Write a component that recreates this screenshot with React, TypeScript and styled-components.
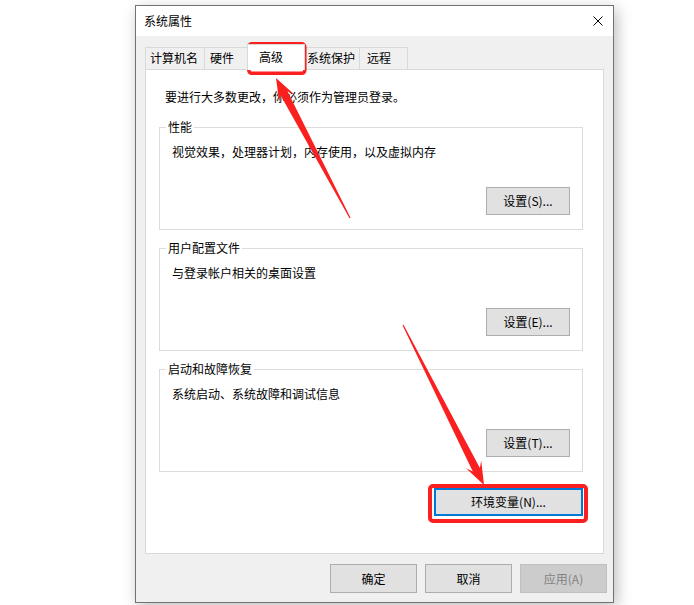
import React from "react";
import styled, { createGlobalStyle } from "styled-components";

const GlobalStyle = createGlobalStyle`
  html, body { margin: 0; padding: 0; background: #fff; }
  body {
    font-family: "Noto Sans CJK SC", "Noto Sans", sans-serif;
    font-size: 12px;
    color: #000;
  }
`;

const Page = styled.div`
  position: relative;
  width: 694px;
  height: 605px;
  overflow: hidden;
  box-sizing: border-box;
  padding: 5px 0 0 135px;
`;

const Window = styled.div`
  width: 479px;
  box-sizing: border-box;
  border: 1px solid #727272;
  box-shadow: 3px 4px 14px rgba(0, 0, 0, 0.26);
  display: flex;
  flex-direction: column;
  background: #f0f0f0;
`;

const TitleBar = styled.div`
  height: 30px;
  background: #fff;
  display: flex;
  align-items: center;
  justify-content: space-between;
  padding: 0 10px 0 8px;
`;

const Title = styled.span`
  line-height: 16px;
`;

const Body = styled.div`
  display: flex;
  flex-direction: column;
  padding: 7px 5px 9px 9px;
`;

const TabRow = styled.div`
  display: flex;
  align-items: flex-end;
  height: 26px;
`;

const Tab = styled.div<{ $w: number; $pad: number; $active?: boolean }>`
  box-sizing: border-box;
  width: ${(p) => p.$w}px;
  height: ${(p) => (p.$active ? 26 : 22)}px;
  margin-bottom: ${(p) => (p.$active ? -1 : 0)}px;
  padding-left: ${(p) => p.$pad}px;
  border: 1px solid #d9d9d9;
  border-bottom: none;
  background: ${(p) => (p.$active ? "#fff" : "#f0f0f0")};
  line-height: ${(p) => (p.$active ? 24 : 20)}px;
  white-space: nowrap;
  position: relative;
  z-index: ${(p) => (p.$active ? 1 : 0)};
  & + & { margin-left: -1px; }
`;

const Panel = styled.div`
  box-sizing: border-box;
  height: 485px;
  margin-right: 4px;
  background: #fff;
  border: 1px solid #d9d9d9;
  padding: 19px 20px 0 13px;
  display: flex;
  flex-direction: column;
`;

const Intro = styled.div`
  line-height: 16px;
  padding-left: 6px;
`;

const Group = styled.div<{ $mt: number }>`
  box-sizing: border-box;
  height: 103px;
  margin-top: ${(p) => p.$mt}px;
  border: 1px solid #dcdcdc;
  padding: 0 12px 14px 12px;
  display: flex;
  flex-direction: column;
`;

const Legend = styled.span`
  align-self: flex-start;
  margin: -9px 0 0 -6px;
  padding: 0 2px;
  background: #fff;
  line-height: 16px;
`;

const Desc = styled.div`
  margin-top: 9px;
  line-height: 16px;
`;

const Button = styled.div<{ $w?: number; $h?: number; $disabled?: boolean; $focus?: boolean }>`
  box-sizing: border-box;
  width: ${(p) => p.$w ?? 84}px;
  height: ${(p) => p.$h ?? 28}px;
  border: ${(p) =>
    p.$focus ? "2px solid #0078d7" : p.$disabled ? "1px solid #bfbfbf" : "1px solid #adadad"};
  background: ${(p) => (p.$disabled ? "#cccccc" : "#e1e1e1")};
  color: ${(p) => (p.$disabled ? "#838383" : "#000")};
  display: flex;
  align-items: center;
  justify-content: center;
  line-height: 16px;
  white-space: nowrap;
`;

const GroupButton = styled(Button)`
  margin-top: auto;
  align-self: flex-end;
`;

const EnvButton = styled(Button)`
  margin-top: 16px;
  align-self: flex-end;
`;

const ButtonRow = styled.div`
  display: flex;
  justify-content: flex-end;
  gap: 8px;
  margin-top: 10px;
  padding-right: 1px;
`;

const Overlay = styled.svg`
  position: absolute;
  left: 0;
  top: 0;
  width: 694px;
  height: 605px;
  pointer-events: none;
`;

function arrowPoints(tx: number, ty: number, px: number, py: number): string {
  const dx = px - tx;
  const dy = py - ty;
  const len = Math.hypot(dx, dy);
  const ux = dx / len;
  const uy = dy / len;
  const nx = -uy;
  const ny = ux;
  const L = 23;
  const W = 8.5;
  const S = 17;
  const w1 = 4;
  const w0 = 0.6;
  const bx = px - L * ux;
  const by = py - L * uy;
  const sx = px - S * ux;
  const sy = py - S * uy;
  const pts: [number, number][] = [
    [px, py],
    [bx + W * nx, by + W * ny],
    [sx + w1 * nx, sy + w1 * ny],
    [tx + w0 * nx, ty + w0 * ny],
    [tx - w0 * nx, ty - w0 * ny],
    [sx - w1 * nx, sy - w1 * ny],
    [bx - W * nx, by - W * ny],
  ];
  return pts.map(([x, y]) => `${x.toFixed(1)},${y.toFixed(1)}`).join(" ");
}

const tabs = [
  { label: "计算机名", w: 60, pad: 4 },
  { label: "硬件", w: 44, pad: 5 },
  { label: "高级", w: 58, pad: 11, active: true },
  { label: "系统保护", w: 56, pad: 2 },
  { label: "远程", w: 49, pad: 7 },
];

const groups = [
  { legend: "性能", desc: "视觉效果，处理器计划，内存使用，以及虚拟内存", btn: "设置(S)...", mt: 22 },
  { legend: "用户配置文件", desc: "与登录帐户相关的桌面设置", btn: "设置(E)...", mt: 18 },
  { legend: "启动和故障恢复", desc: "系统启动、系统故障和调试信息", btn: "设置(T)...", mt: 18 },
];

export default function App() {
  return (
    <>
      <GlobalStyle />
      <Page>
        <Window>
          <TitleBar>
            <Title>系统属性</Title>
            <svg width="10" height="10" viewBox="0 0 10 10">
              <path d="M0.5 0.5 L9.5 9.5 M9.5 0.5 L0.5 9.5" stroke="#000" strokeWidth="1" fill="none" />
            </svg>
          </TitleBar>
          <Body>
            <TabRow>
              {tabs.map((t) => (
                <Tab key={t.label} $w={t.w} $pad={t.pad} $active={t.active}>
                  {t.label}
                </Tab>
              ))}
            </TabRow>
            <Panel>
              <Intro>要进行大多数更改，你必须作为管理员登录。</Intro>
              {groups.map((g) => (
                <Group key={g.legend} $mt={g.mt}>
                  <Legend>{g.legend}</Legend>
                  <Desc>{g.desc}</Desc>
                  <GroupButton>{g.btn}</GroupButton>
                </Group>
              ))}
              <EnvButton $w={149} $focus>
                环境变量(N)...
              </EnvButton>
            </Panel>
            <ButtonRow>
              <Button $w={87} $h={29}>确定</Button>
              <Button $w={87} $h={29}>取消</Button>
              <Button $w={87} $h={29} $disabled>应用(A)</Button>
            </ButtonRow>
          </Body>
        </Window>
        <Overlay viewBox="0 0 694 605">
          <rect x="248.8" y="43.8" width="56" height="29.5" rx="3" fill="none" stroke="#fb1f1f" strokeWidth="3.5" />
          <rect x="430" y="486" width="156" height="35" rx="3" fill="none" stroke="#fb1f1f" strokeWidth="4" />
          <polygon points={arrowPoints(350, 218, 276, 78)} fill="#fb2020" />
          <polygon points={arrowPoints(403, 325, 484, 485)} fill="#fb2020" />
        </Overlay>
      </Page>
    </>
  );
}
